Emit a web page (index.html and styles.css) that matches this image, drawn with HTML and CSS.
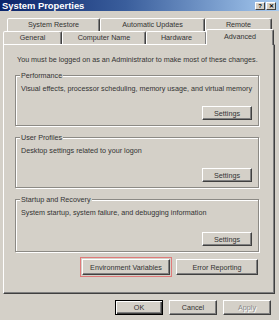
FILE: index.html
```html
<!DOCTYPE html>
<html>
<head>
<meta charset="utf-8">
<title>System Properties</title>
<link rel="stylesheet" href="styles.css">
</head>
<body>
<div class="window">
  <div class="titlebar">
    <span class="title">System Properties</span>
    <div class="title-btns">
      <span class="tbtn">?</span>
      <span class="tbtn">&#x2715;</span>
    </div>
  </div>
  <div class="tabs">
    <div class="tab-row row1">
      <div class="tab w-restore">System Restore</div>
      <div class="tab w-updates">Automatic Updates</div>
      <div class="tab w-remote">Remote</div>
    </div>
    <div class="tab-row row2">
      <div class="tab w-general">General</div>
      <div class="tab w-computer">Computer Name</div>
      <div class="tab w-hardware">Hardware</div>
      <div class="tab w-advanced selected">Advanced</div>
    </div>
  </div>
  <div class="panel">
    <p class="intro">You must be logged on as an Administrator to make most of these changes.</p>
    <div class="group g-perf">
      <span class="legend">Performance</span>
      <p class="desc">Visual effects, processor scheduling, memory usage, and virtual memory</p>
      <button class="btn settings">Settings</button>
    </div>
    <div class="group g-user">
      <span class="legend">User Profiles</span>
      <p class="desc">Desktop settings related to your logon</p>
      <button class="btn settings">Settings</button>
    </div>
    <div class="group g-startup">
      <span class="legend">Startup and Recovery</span>
      <p class="desc">System startup, system failure, and debugging information</p>
      <button class="btn settings">Settings</button>
    </div>
    <div class="panel-btns">
      <button class="btn env">Environment Variables</button>
      <button class="btn err">Error Reporting</button>
    </div>
  </div>
  <div class="footer">
    <button class="btn foot default">OK</button>
    <button class="btn foot">Cancel</button>
    <button class="btn foot disabled">Apply</button>
  </div>
</div>
</body>
</html>
```
FILE: styles.css
```css
* { box-sizing: border-box; }
html, body { margin: 0; padding: 0; }
body {
  width: 279px;
  height: 320px;
  overflow: hidden;
  background: #d4d0c8;
  font-family: "Liberation Sans", Arial, sans-serif;
  font-size: 7.2px;
  color: #000;
}
.window {
  width: 279px;
  height: 320px;
  display: flex;
  flex-direction: column;
  background: #d4d0c8;
}
.titlebar {
  height: 11px;
  display: flex;
  align-items: center;
  justify-content: space-between;
  padding: 0 3px 0 2px;
  background: linear-gradient(to right, #0a246a 0%, #3a5e9c 45%, #a6caf0 100%);
}
.title {
  color: #fff;
  font-weight: bold;
  font-size: 9.4px;
  line-height: 11px;
}
.title-btns { display: flex; gap: 1px; }
.tbtn {
  width: 10px;
  height: 8px;
  background: #d4d0c8;
  border: 1px solid;
  border-color: #fff #404040 #404040 #fff;
  font-size: 6px;
  line-height: 6px;
  text-align: center;
  font-weight: bold;
  color: #000;
}
.tabs {
  margin-top: 7px;
  position: relative;
  z-index: 2;
}
.tab-row {
  display: flex;
  height: 13px;
  align-items: flex-end;
}
.row1 { padding-left: 7px; }
.row2 { padding-left: 3px; }
.tab {
  height: 13px;
  border: 1px solid;
  border-bottom: none;
  border-color: #fff #404040 transparent #fff;
  border-radius: 2px 2px 0 0;
  box-shadow: inset -1px 0 0 #808080;
  text-align: center;
  line-height: 12px;
  color: #333;
  background: #d4d0c8;
  white-space: nowrap;
}
.w-restore { width: 93px; }
.w-updates { width: 105px; }
.w-remote { width: 67px; }
.w-general { width: 59px; }
.w-computer { width: 84px; }
.w-hardware { width: 61px; }
.w-advanced { width: 68px; }
.tab.selected {
  height: 16px;
  margin-left: -1px;
  margin-bottom: -1px;
  line-height: 13px;
  position: relative;
  z-index: 3;
}
.panel {
  margin: 0 4px 0 3px;
  height: 250px;
  border: 1px solid;
  border-color: #fff #404040 #404040 #fff;
  box-shadow: inset -1px -1px 0 #808080;
  padding: 10px 15px 0 11px;
  display: flex;
  flex-direction: column;
}
.intro {
  margin: 0 0 11px 2px;
  line-height: 9px;
  color: #333;
  white-space: nowrap;
}
.group {
  position: relative;
  border: 1px solid #8c8a85;
  box-shadow: inset 1px 1px 0 #fff, 1px 1px 0 #fff;
  height: 51px;
  margin-bottom: 11px;
  padding: 8px 6px 5px 5px;
  display: flex;
  flex-direction: column;
}
.g-startup { height: 53px; margin-bottom: 7px; }
.legend {
  position: absolute;
  top: -5px;
  left: 4px;
  padding: 0 1px;
  background: #d4d0c8;
  line-height: 9px;
  color: #333;
}
.desc {
  margin: 0;
  line-height: 9px;
  color: #333;
  white-space: nowrap;
}
.btn {
  font-family: inherit;
  font-size: 7.2px;
  color: #333;
  background: #d4d0c8;
  border: 1px solid;
  border-color: #fff #404040 #404040 #fff;
  box-shadow: inset -1px -1px 0 #808080;
  padding: 0;
  margin: 0;
  white-space: nowrap;
}
.settings {
  align-self: flex-end;
  margin-top: auto;
  width: 50px;
  height: 14px;
}
.panel-btns {
  display: flex;
  justify-content: flex-end;
  gap: 6px;
  padding-right: 1px;
}
.env {
  width: 88px;
  height: 16px;
  outline: 1px solid #e07a7a;
  outline-offset: 1px;
}
.err {
  width: 82px;
  height: 16px;
}
.footer {
  display: flex;
  justify-content: flex-end;
  gap: 6px;
  padding: 6px 8px 0 0;
}
.foot {
  width: 48px;
  height: 15px;
}
.default {
  border: 1px solid #000;
  box-shadow: inset 1px 1px 0 #fff, inset -1px -1px 0 #404040, inset -2px -2px 0 #808080;
}
.disabled {
  color: #8a8a8a;
  text-shadow: 1px 1px 0 #fff;
}
```
